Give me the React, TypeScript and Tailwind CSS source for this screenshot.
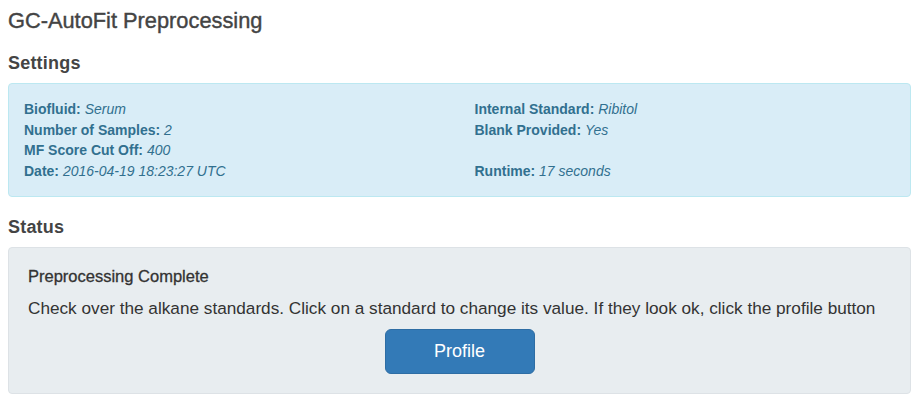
import React from 'react';

interface Field {
  label: string;
  value: string;
}

const leftFields: (Field | null)[] = [
  { label: 'Biofluid', value: 'Serum' },
  { label: 'Number of Samples', value: '2' },
  { label: 'MF Score Cut Off', value: '400' },
  { label: 'Date', value: '2016-04-19 18:23:27 UTC' },
];

const rightFields: (Field | null)[] = [
  { label: 'Internal Standard', value: 'Ribitol' },
  { label: 'Blank Provided', value: 'Yes' },
  null,
  { label: 'Runtime', value: '17 seconds' },
];

const FieldList: React.FC<{ fields: (Field | null)[] }> = ({ fields }) => (
  <div className="px-[15px]">
    {fields.map((f, i) =>
      f ? (
        <div key={i} className="h-[20.5px] whitespace-nowrap">
          <b>{f.label}:</b> <i>{f.value}</i>
        </div>
      ) : (
        <div key={i} className="h-[20.5px]" />
      )
    )}
  </div>
);

const App: React.FC = () => {
  return (
    <div
      className="w-[924px] h-[410px] bg-white text-[#333] pl-2 pr-[13px]"
      style={{ fontFamily: '"Liberation Sans", Arial, sans-serif' }}
    >
      <h3 className="pt-[8px] text-[21.8px] leading-[26px] text-[#444] [-webkit-text-stroke:0.4px_#444]">
        GC-AutoFit Preprocessing
      </h3>

      <h4 className="mt-[19px] text-[18px] leading-[20px] text-[#444] font-bold tracking-[0.2px]">Settings</h4>

      <div className="mt-[10px] rounded-[4px] border border-[#bce8f1] bg-[#d9edf7] px-[15px] py-[15px] text-[14px] leading-[20.5px] text-[#31708f]">
        <div className="-mx-[15px] grid grid-cols-2">
          <FieldList fields={leftFields} />
          <FieldList fields={rightFields} />
        </div>
      </div>

      <h4 className="mt-[20px] text-[18px] leading-[20px] text-[#444] font-bold tracking-[0.2px]">Status</h4>

      <div className="mt-[10px] rounded-[4px] border border-[#dde2e6] bg-[#e8edf0] px-[19px] py-[19px]">
        <div className="text-[16.5px] leading-[18px] text-[#333] [-webkit-text-stroke:0.3px_#333]">
          Preprocessing Complete
        </div>
        <p className="mt-[13px] text-[17.2px] leading-[20px] text-[#333] whitespace-nowrap">
          Check over the alkane standards. Click on a standard to change its value. If they look ok, click the profile button
        </p>
        <div className="mt-[11px] flex justify-center">
          <button className="w-[150px] h-[45px] rounded-[6px] border border-[#2e6da4] bg-[#337ab7] text-white text-[18px]">
            Profile
          </button>
        </div>
      </div>
    </div>
  );
};

export default App;
